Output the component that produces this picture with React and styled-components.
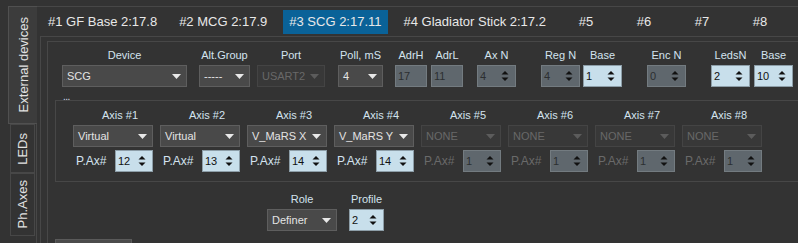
import React from 'react';
import styled, { createGlobalStyle } from 'styled-components';

// STYLES
const GlobalStyle = createGlobalStyle`
body{
    margin: 0;
    background: #333333;
    font-family: "Liberation Sans", Arial, sans-serif;
}
`;

const Root = styled.div`
display: flex;
width: 798px;
height: 243px;
overflow: hidden;
background: #333333;
`;

const SideBar = styled.div`
width: 36px;
flex-shrink: 0;
display: flex;
flex-direction: column;
align-items: flex-end;
padding-top: 6px;
`;

const SideTab = styled.div`
box-sizing: border-box;
display: flex;
align-items: center;
justify-content: center;
height: ${props => props.$h}px;
width: ${props => props.$active ? 29 : 25}px;
margin-right: ${props => props.$active ? -1 : 1}px;
background: ${props => props.$active ? '#3c3c3c' : '#333333'};
border: 1px solid ${props => props.$active ? '#505050' : '#474747'};
border-right: ${props => props.$active ? '0' : '1px solid #474747'};
z-index: ${props => props.$active ? 1 : 0};
`;

const SideTabText = styled.span`
writing-mode: vertical-rl;
transform: rotate(180deg);
font-size: 13px;
color: #e2e2e2;
white-space: nowrap;
`;

const Main = styled.div`
flex: 1;
min-width: 0;
display: flex;
flex-direction: column;
margin-top: 6px;
border-top: 1px solid #474747;
border-left: 1px solid #474747;
`;

const TabBar = styled.div`
height: 29px;
flex-shrink: 0;
display: flex;
align-items: center;
gap: 10px;
padding-left: 5px;
`;

const Tab = styled.div`
height: 24px;
min-width: 48px;
box-sizing: border-box;
display: flex;
align-items: center;
justify-content: center;
padding: 0 6px;
font-size: 13px;
white-space: nowrap;
color: #e8e8e8;
background: ${props => props.$active ? '#0a6298' : 'transparent'};
`;

const TabPane = styled.div`
flex: 1;
display: flex;
flex-direction: column;
margin-left: 3px;
padding: 4px 0 0 6px;
border-top: 1px solid #474747;
border-left: 1px solid #474747;
`;

const GroupBox = styled.div`
flex: 1;
display: flex;
flex-direction: column;
padding-top: 6px;
border-top: 1px solid #474747;
border-left: 1px solid #474747;
`;

const Row = styled.div`
display: flex;
align-items: flex-start;
margin-left: ${props => props.$ml || 0}px;
margin-top: ${props => props.$mt || 0}px;
`;

const Field = styled.div`
display: flex;
flex-direction: column;
align-items: center;
gap: 3px;
width: ${props => props.$w}px;
margin-left: ${props => props.$ml || 0}px;
`;

const Label = styled.div`
font-size: 11px;
line-height: 14px;
height: 14px;
color: ${props => props.$off ? '#6c6c6c' : '#d3e3ef'};
white-space: nowrap;
`;

const Combo = styled.div`
box-sizing: border-box;
width: ${props => props.$w ? `${props.$w}px` : '100%'};
height: 22px;
display: flex;
align-items: center;
justify-content: space-between;
padding: 0 5px 0 4px;
font-size: 11px;
white-space: nowrap;
color: ${props => props.$off ? '#686868' : '#e4e4e4'};
background: ${props => props.$off ? '#383838' : '#494949'};
border: 1px solid ${props => props.$off ? '#444444' : '#5e5e5e'};
`;

const Edit = styled.div`
box-sizing: border-box;
width: ${props => props.$w ? `${props.$w}px` : '100%'};
height: 22px;
display: flex;
align-items: center;
justify-content: space-between;
padding: 0 6px 0 2px;
font-size: 11px;
color: ${props => props.$light ? '#111111' : '#2c2f31'};
background: ${props => props.$light ? '#c8dfeb' : '#5f676d'};
border: 1px solid ${props => props.$light ? '#8d9ea8' : '#737b80'};
`;

const AxesBox = styled.div`
position: relative;
margin: 13px 0 0 7px;
padding: 7px 0 9px 17px;
display: flex;
gap: 7px;
border-top: 1px solid #474747;
border-left: 1px solid #474747;
border-bottom: 1px solid #474747;
`;

const BoxTitle = styled.span`
position: absolute;
top: -9px;
left: 7px;
font-size: 10px;
line-height: 10px;
letter-spacing: -0.5px;
color: #cfdeea;
`;

const AxisCol = styled.div`
width: 80px;
display: flex;
flex-direction: column;
gap: 3px;
`;

const AxisLabel = styled(Label)`
padding-left: 14px;
text-align: center;
`;

const PaxRow = styled.div`
display: flex;
align-items: center;
justify-content: space-between;
padding-left: 3px;
`;

const PaxText = styled.span`
font-size: 12px;
color: ${props => props.$off ? '#6a6a6a' : '#d3e3ef'};
`;

const BottomButton = styled.div`
width: 75px;
height: 20px;
margin: 8px 0 0 7px;
background: #4b4b4b;
border: 1px solid #5a5a5a;
`;

// ICONS
const DropArrow = ( { off } ) => (
    <svg width="9" height="5" viewBox="0 0 9 5">
        <polygon points="0,0 9,0 4.5,5" fill={off ? '#5c5c5c' : '#e8e8e8'} />
    </svg>
);

const SpinArrows = () => (
    <svg width="8" height="12" viewBox="0 0 8 12">
        <polygon points="4,1 7.5,4.5 0.5,4.5" fill="#111" />
        <polygon points="0.5,7.5 7.5,7.5 4,11" fill="#111" />
    </svg>
);

const Spin = ( { value, light, w } ) => (
    <Edit $light={light} $w={w}>
        <span>{value}</span>
        <SpinArrows />
    </Edit>
);

const Drop = ( { value, off, w } ) => (
    <Combo $off={off} $w={w}>
        <span>{value}</span>
        <DropArrow off={off} />
    </Combo>
);

// DATA
const devTabs = ['#1 GF Base 2:17.8', '#2 MCG 2:17.9', '#3 SCG 2:17.11', '#4 Gladiator Stick 2:17.2', '#5', '#6', '#7', '#8'];

const axes = [
    { mode: 'Virtual', pax: 12 },
    { mode: 'Virtual', pax: 13 },
    { mode: 'V_MaRS X', pax: 14 },
    { mode: 'V_MaRS Y', pax: 14 },
    { mode: 'NONE', pax: 1, off: true },
    { mode: 'NONE', pax: 1, off: true },
    { mode: 'NONE', pax: 1, off: true },
    { mode: 'NONE', pax: 1, off: true },
];

const App = () => {
    return (
        <Root>
            <GlobalStyle />
            <SideBar>
                <SideTab $active $h={118}><SideTabText>External devices</SideTabText></SideTab>
                <SideTab $h={49}><SideTabText>LEDs</SideTabText></SideTab>
                <SideTab $h={63}><SideTabText>Ph.Axes</SideTabText></SideTab>
            </SideBar>
            <Main>
                <TabBar>
                    {devTabs.map( ( t, i ) => <Tab key={t} $active={i === 2}>{t}</Tab> )}
                </TabBar>
                <TabPane>
                    <GroupBox>
                        <Row $ml={14}>
                            <Field $w={125}><Label>Device</Label><Drop value="SCG" /></Field>
                            <Field $w={51} $ml={12}><Label>Alt.Group</Label><Drop value="-----" /></Field>
                            <Field $w={68} $ml={7}><Label>Port</Label><Drop value="USART2" off /></Field>
                            <Field $w={45} $ml={13}><Label>Poll, mS</Label><Drop value="4" /></Field>
                            <Field $w={32} $ml={12}><Label>AdrH</Label><Edit><span>17</span></Edit></Field>
                            <Field $w={32} $ml={4}><Label>AdrL</Label><Edit><span>11</span></Edit></Field>
                            <Field $w={39} $ml={14}><Label>Ax N</Label><Spin value="4" /></Field>
                            <Field $w={39} $ml={25}><Label>Reg N</Label><Spin value="4" /></Field>
                            <Field $w={39} $ml={3}><Label>Base</Label><Spin value="1" light /></Field>
                            <Field $w={39} $ml={25}><Label>Enc N</Label><Spin value="0" /></Field>
                            <Field $w={39} $ml={25}><Label>LedsN</Label><Spin value="2" light /></Field>
                            <Field $w={39} $ml={4}><Label>Base</Label><Spin value="10" light /></Field>
                        </Row>
                        <AxesBox>
                            <BoxTitle>...</BoxTitle>
                            {axes.map( ( a, i ) => (
                                <AxisCol key={i}>
                                    <AxisLabel>{`Axis #${i + 1}`}</AxisLabel>
                                    <Drop value={a.mode} off={a.off} />
                                    <PaxRow>
                                        <PaxText $off={a.off}>P.Ax#</PaxText>
                                        <Spin value={a.pax} light={!a.off} w={38} />
                                    </PaxRow>
                                </AxisCol>
                            ) )}
                        </AxesBox>
                        <Row $ml={219} $mt={10}>
                            <Field $w={70}><Label>Role</Label><Drop value="Definer" /></Field>
                            <Field $w={35} $ml={12}><Label>Profile</Label><Spin value="2" light /></Field>
                        </Row>
                        <BottomButton />
                    </GroupBox>
                </TabPane>
            </Main>
        </Root>
    );
};

export default App;
